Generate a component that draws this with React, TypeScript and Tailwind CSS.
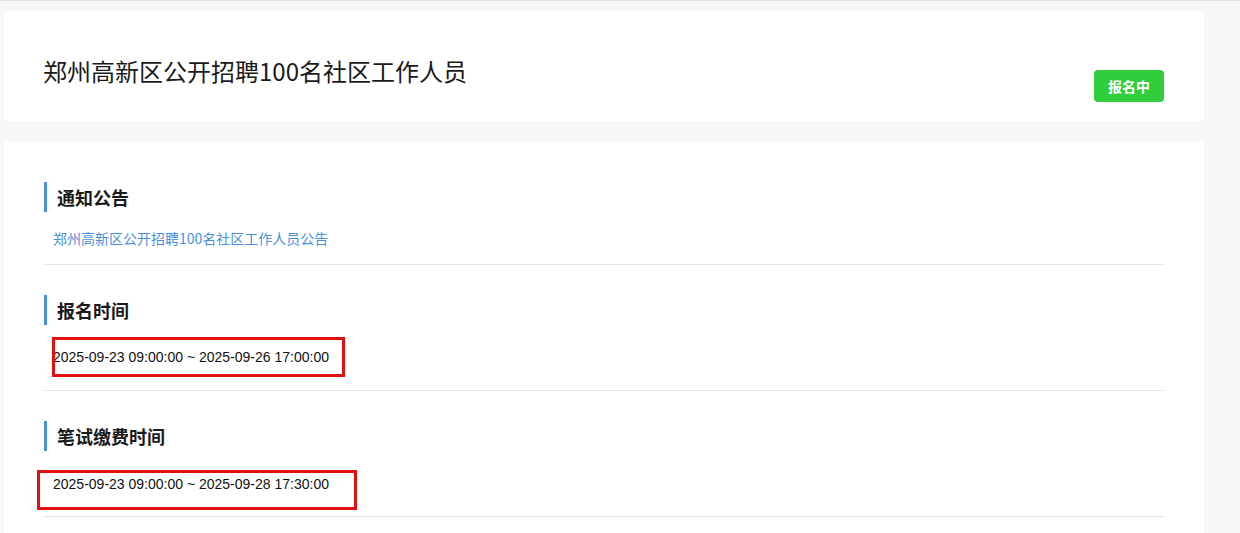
import React from 'react';

interface Section {
  title: string;
  content: string;
  kind: 'link' | 'time';
  highlight?: string;
}

const CJK = "font-['Noto_Sans_CJK_SC',sans-serif]";

const sections: Section[] = [
  { title: '通知公告', content: '郑州高新区公开招聘100名社区工作人员公告', kind: 'link' },
  {
    title: '报名时间',
    content: '2025-09-23 09:00:00 ~ 2025-09-26 17:00:00',
    kind: 'time',
    highlight: 'left-[8px] top-[-10px] w-[293px] h-[40px]',
  },
  {
    title: '笔试缴费时间',
    content: '2025-09-23 09:00:00 ~ 2025-09-28 17:30:00',
    kind: 'time',
    highlight: 'left-[-7px] top-[-4px] w-[320px] h-[40px]',
  },
];

const SectionBlock: React.FC<{ section: Section; index: number }> = ({ section, index }) => {
  const isLink = section.kind === 'link';
  return (
    <div className={`border-b border-[#e3e3e3] ${index === 0 ? '' : 'mt-[30px]'} ${isLink ? 'pb-[16px]' : index === 1 ? 'pb-[23px]' : 'pb-[22px]'}`}>
      <div className={`h-[30px] flex items-center border-l-[3px] border-[#4a90e2] pl-[10px] text-[18px] font-bold text-[#1a1a1a] ${CJK}`}>
        {section.title}
      </div>
      <div className={`relative pl-[9px] h-[20px] flex items-center ${isLink ? 'mt-[16px]' : index === 1 ? 'mt-[22px]' : 'mt-[23px]'}`}>
        {isLink ? (
          <a href="#" className={`text-[14px] text-[#4a8fdc] ${CJK}`}>
            {section.content}
          </a>
        ) : (
          <span className="text-[14px] text-[#111] font-['Liberation_Sans',Arial,sans-serif]">{section.content}</span>
        )}
        {section.highlight && (
          <div className={`absolute border-[3px] border-[#e01010] pointer-events-none ${section.highlight}`} />
        )}
      </div>
    </div>
  );
};

export default function App() {
  return (
    <div className="min-h-screen w-[1240px] h-[533px] overflow-hidden bg-[#f7f7f7] border-t border-[#e4e4e4]">
      <div className="ml-[4px] w-[1200px] mt-[10px] h-[110px] bg-white flex justify-between px-[40px]">
        <h1 className={`pt-[44px] -ml-[1px] text-[24px] leading-[32px] font-normal text-[#1a1a1a] ${CJK}`}>
          郑州高新区公开招聘100名社区工作人员
        </h1>
        <span
          className={`mt-[59px] w-[70px] h-[32px] rounded-[4px] bg-[#2fcc3c] text-white text-[14px] font-bold flex items-center justify-center ${CJK}`}
        >
          报名中
        </span>
      </div>
      <div className="ml-[4px] w-[1200px] mt-[21px] min-h-[500px] bg-white px-[40px] pt-[40px]">
        {sections.map((s, i) => (
          <SectionBlock key={s.title} section={s} index={i} />
        ))}
      </div>
    </div>
  );
}
